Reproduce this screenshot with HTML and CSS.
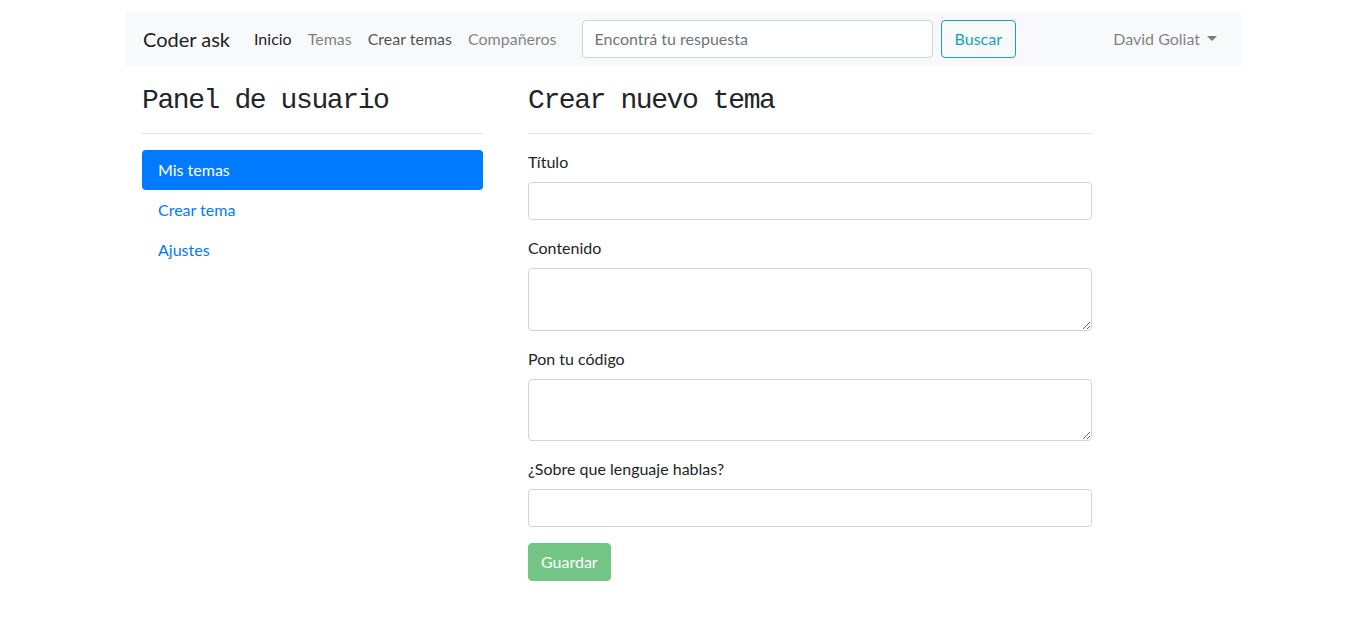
FILE: index.html
```html
<!DOCTYPE html>
<html lang="es">
<head>
<meta charset="utf-8">
<title>Coder ask</title>
<link rel="stylesheet" href="styles.css">
</head>
<body>
<nav class="navbar">
  <a class="brand" href="#">Coder ask</a>
  <ul class="nav-links">
    <li><a class="nav-link active" href="#">Inicio</a></li>
    <li><a class="nav-link" href="#">Temas</a></li>
    <li><a class="nav-link hover" href="#">Crear temas</a></li>
    <li><a class="nav-link" href="#">Compañeros</a></li>
  </ul>
  <form class="search">
    <input class="search-input" type="text" placeholder="Encontrá tu respuesta">
    <button class="btn-search" type="button">Buscar</button>
  </form>
  <a class="nav-link user" href="#">David Goliat<span class="caret"></span></a>
</nav>

<main class="main">
  <aside class="sidebar">
    <h2 class="title">Panel de usuario</h2>
    <hr class="rule">
    <ul class="pills">
      <li><a class="pill active" href="#">Mis temas</a></li>
      <li><a class="pill" href="#">Crear tema</a></li>
      <li><a class="pill" href="#">Ajustes</a></li>
    </ul>
  </aside>
  <section class="content">
    <h2 class="title">Crear nuevo tema</h2>
    <hr class="rule">
    <form class="topic-form">
      <div class="group">
        <label class="label">Título</label>
        <input class="control" type="text">
      </div>
      <div class="group">
        <label class="label">Contenido</label>
        <textarea class="control area" rows="2"></textarea>
      </div>
      <div class="group">
        <label class="label">Pon tu código</label>
        <textarea class="control area" rows="2"></textarea>
      </div>
      <div class="group">
        <label class="label">¿Sobre que lenguaje hablas?</label>
        <input class="control" type="text">
      </div>
      <button class="btn-save" type="button">Guardar</button>
    </form>
  </section>
</main>
</body>
</html>
```

FILE: styles.css
```css
* { box-sizing: border-box; }

body {
  margin: 0;
  font-family: Lato, "Noto Sans", sans-serif;
  font-size: 16px;
  line-height: 1.5;
  color: #212529;
  background: #fff;
}

a { text-decoration: none; }
ul { list-style: none; margin: 0; padding: 0; }

.navbar {
  width: 1115px;
  margin: 11px 0 0 126px;
  height: 55px;
  padding: 8px 16px 8px 17px;
  background: #f8f9fa;
  display: flex;
  align-items: center;
}

.brand {
  font-size: 20px;
  line-height: 30px;
  color: rgba(0,0,0,.9);
  margin-right: 16px;
}

.nav-links { display: flex; }

.nav-link {
  display: block;
  padding: 8px;
  color: rgba(0,0,0,.5);
}
.nav-link.active { color: rgba(0,0,0,.9); }
.nav-link.hover { color: rgba(0,0,0,.7); }

.search {
  display: flex;
  margin-left: 17px;
}

.search-input {
  width: 351px;
  height: 38px;
  padding: 6px 12px;
  border: 1px solid #ced4da;
  border-radius: 4px;
  font: inherit;
  color: #495057;
  background: #fff;
}
.search-input::placeholder { color: #6c757d; }

.btn-search {
  margin-left: 8px;
  height: 38px;
  padding: 6px 13px;
  border: 1px solid #17a2b8;
  border-radius: 4px;
  background: transparent;
  color: #17a2b8;
  font: inherit;
}

.user { margin-left: auto; }

.caret {
  display: inline-block;
  margin-left: 7px;
  vertical-align: 4px;
  border-top: 5px solid rgba(0,0,0,.5);
  border-left: 5px solid transparent;
  border-right: 5px solid transparent;
}

.main {
  display: flex;
  margin-left: 142px;
  padding-top: 18px;
  gap: 45px;
}

.sidebar { width: 341px; }
.content { width: 564px; }

.title {
  margin: 0;
  font-family: "Liberation Mono", "DejaVu Sans Mono", monospace;
  font-weight: 400;
  font-size: 28px;
  letter-spacing: -1.4px;
  line-height: 34px;
  color: #212529;
}

.rule {
  margin: 15px 0 16px;
  border: 0;
  border-top: 1px solid rgba(0,0,0,.1);
}

.pill {
  display: block;
  padding: 8px 16px;
  border-radius: 4px;
  color: #007bff;
}
.pill.active {
  background: #007bff;
  color: #fff;
}

.group { margin-bottom: 16px; }

.label {
  display: block;
  margin-bottom: 8px;
}

.control {
  display: block;
  width: 100%;
  height: 38px;
  padding: 6px 12px;
  border: 1px solid #ced4da;
  border-radius: 4px;
  font: inherit;
  color: #495057;
  background: #fff;
}

.area {
  height: 62.5px;
  resize: vertical;
}

.btn-save {
  height: 38px;
  padding: 6px 12px;
  border: 1px solid #28a745;
  border-radius: 4px;
  background: #28a745;
  color: #fff;
  font: inherit;
  opacity: .65;
}
```
